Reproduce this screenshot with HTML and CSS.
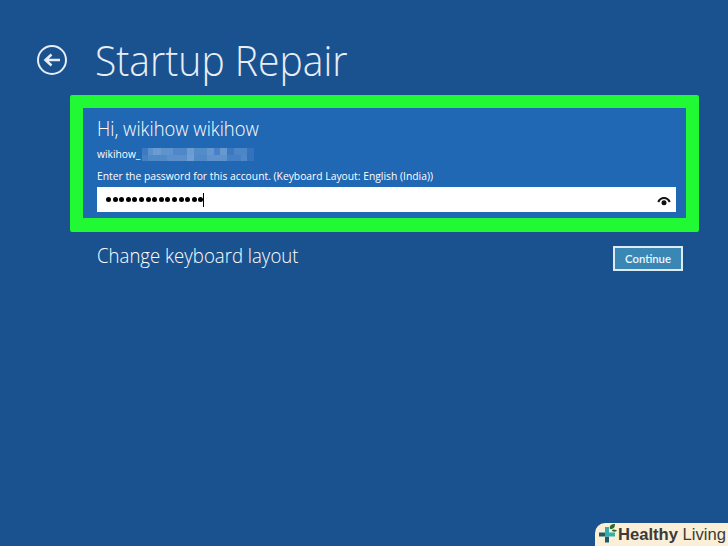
FILE: index.html
```html
<!DOCTYPE html>
<html lang="en">
<head>
	<meta charset="UTF-8">
	<meta name="viewport" content="width=device-width, initial-scale=1">

	<title>Startup Repair</title>

	<link rel="stylesheet" href="styles.css">
</head>
<body>

	<header class="top">
		<a class="back" href="#" aria-label="Back">
			<svg width="32" height="32" viewBox="0 0 32 32">
				<circle cx="16" cy="16" r="14" />
				<path class="arrow" d="M24 16H9.5M15.5 10.5L9.5 16L15.5 21.5" />
			</svg>
		</a>
		<h1>Startup Repair</h1>
	</header>

	<form class="account">
		<h2>Hi, wikihow wikihow</h2>
		<p class="user"><span>wikihow_</span><span class="mosaic"></span></p>
		<label for="password">Enter the password for this account. (Keyboard Layout: English (India))</label>
		<div class="field" id="password">
			<span class="dots"><i></i><i></i><i></i><i></i><i></i><i></i><i></i><i></i><i></i><i></i><i></i><i></i><i></i><i></i><i></i></span>
			<span class="caret"></span>
			<svg class="eye" width="14" height="10" viewBox="0 0 14 10">
				<path d="M1.2 6C3.800 .6 10.200 .6 12.800 6" />
				<circle cx="7" cy="6.800" r="2.500" />
			</svg>
		</div>
	</form>

	<div class="actions">
		<a class="layout" href="#">Change keyboard layout</a>
		<button type="button">Continue</button>
	</div>

	<div class="brand">
		<svg width="20" height="22" viewBox="0 0 20 22">
			<path fill="#1d5c66" d="M1 8.500h6v4H1zM7 12.500h4v6H7z" />
			<path fill="#35aeb0" d="M7 3h4v5.500h6v4H7z" />
			<path fill="#2c6b2a" d="M12 5C11 1 14 0 17 0C17 3 16 5 12 5zM14 7C14 5 16 5 19 6.500C18 8 16 8 14 7z" />
		</svg>
		<span><b>Healthy</b> Living</span>
	</div>

</body>
</html>
```
FILE: styles.css
```css
* {
	margin: 0;
	padding: 0;
	box-sizing: border-box;
}

body {
	height: 546px;
	overflow: hidden;
	background: #1a5290;
	color: #fff;
	font-family: "Open Sans", sans-serif;
}

a {
	color: inherit;
	text-decoration: none;
}

/* condensed a little, Segoe-like */
h1, h2, label, .user span:first-child, .layout {
	transform: scaleX(.93);
	transform-origin: 0 0;
	white-space: nowrap;
}

.top {
	display: flex;
	align-items: center;
	height: 95px;
	padding: 25px 0 0 36px;
}

.back svg {
	display: block;
	fill: none;
	stroke: #e6edf5;
	stroke-width: 2;
}

.back .arrow {
	stroke-width: 2.6;
}

h1 {
	margin-left: 27px;
	font-size: 42px;
	font-weight: 300;
	line-height: 56px;
	color: #e8eef6;
}

.account {
	width: 629px;
	height: 137px;
	margin-left: 70px;
	padding: 10px 10px 0 14px;
	border: 13px solid #21f935;
	border-bottom-width: 14px;
	border-radius: 2px;
	background: #2067b4;
}

h2 {
	font-size: 19.8px;
	font-weight: 300;
	line-height: 22px;
}

.user {
	display: flex;
	height: 14px;
	margin-top: 7px;
	font-size: 11px;
	line-height: 13px;
}

.user span:first-child {
	width: 45px;
}

/* blurred-out part of the account name */
.mosaic {
	width: 112px;
	height: 13px;
	margin-top: 1px;
	background:
		linear-gradient(90deg, #3c7bc0 0 5%, #5b92cd 5% 10%, #6a9cd2 10% 17%, #5e94ce 17% 28%, #4f88c8 28% 40%, #6b9cd2 40% 46%, #548bc9 46% 58%, #6596cf 58% 64%, #4682c5 64% 70%, #6898d0 70% 76%, #3a79bf 76% 82%, #4d86c7 82% 94%, #3473bb 94%) 0 0 / 100% 7px no-repeat,
		linear-gradient(90deg, #4480c3 0 5%, #5089c8 5% 22%, #5a90cc 22% 40%, #6e9ed3 40% 46%, #5089c8 46% 58%, #5e93cd 58% 76%, #4480c3 76% 88%, #5089c8 88% 94%, #3473bb 94%) 0 7px / 100% 6px no-repeat;
}

label {
	display: block;
	margin-top: 8px;
	font-size: 11.1px;
	line-height: 14px;
}

.field {
	display: flex;
	align-items: center;
	width: 579px;
	height: 25px;
	margin-top: 4px;
	padding: 0 5px 0 9px;
	background: #fff;
}

.dots {
	display: flex;
	gap: 1.6px;
}

.dots i {
	width: 5px;
	height: 5px;
	border-radius: 50%;
	background: #000;
}

.caret {
	width: 1px;
	height: 14px;
	background: #000;
}

.eye {
	margin: 3px 0 0 auto;
	stroke: #111;
	stroke-width: 2;
	fill: none;
}

.eye circle {
	fill: #111;
	stroke: none;
}

.actions {
	display: flex;
	justify-content: space-between;
	width: 586px;
	margin: 11px 0 0 97px;
}

.layout {
	font-size: 20px;
	font-weight: 300;
	line-height: 26px;
}

button {
	width: 70px;
	height: 25px;
	margin-top: 3px;
	border: 2px solid #dcebf4;
	background: #3a87b5;
	color: #eef6fb;
	font: 600 11.3px "Lato", sans-serif;
}

.brand {
	position: absolute;
	right: 0;
	bottom: 0;
	display: flex;
	align-items: center;
	width: 133px;
	height: 23px;
	padding-left: 3px;
	border-top-left-radius: 10px;
	background: #fbefd8;
	color: #3a3a38;
	font: 16.6px/22px "Liberation Sans", sans-serif;
	white-space: nowrap;
}
```
